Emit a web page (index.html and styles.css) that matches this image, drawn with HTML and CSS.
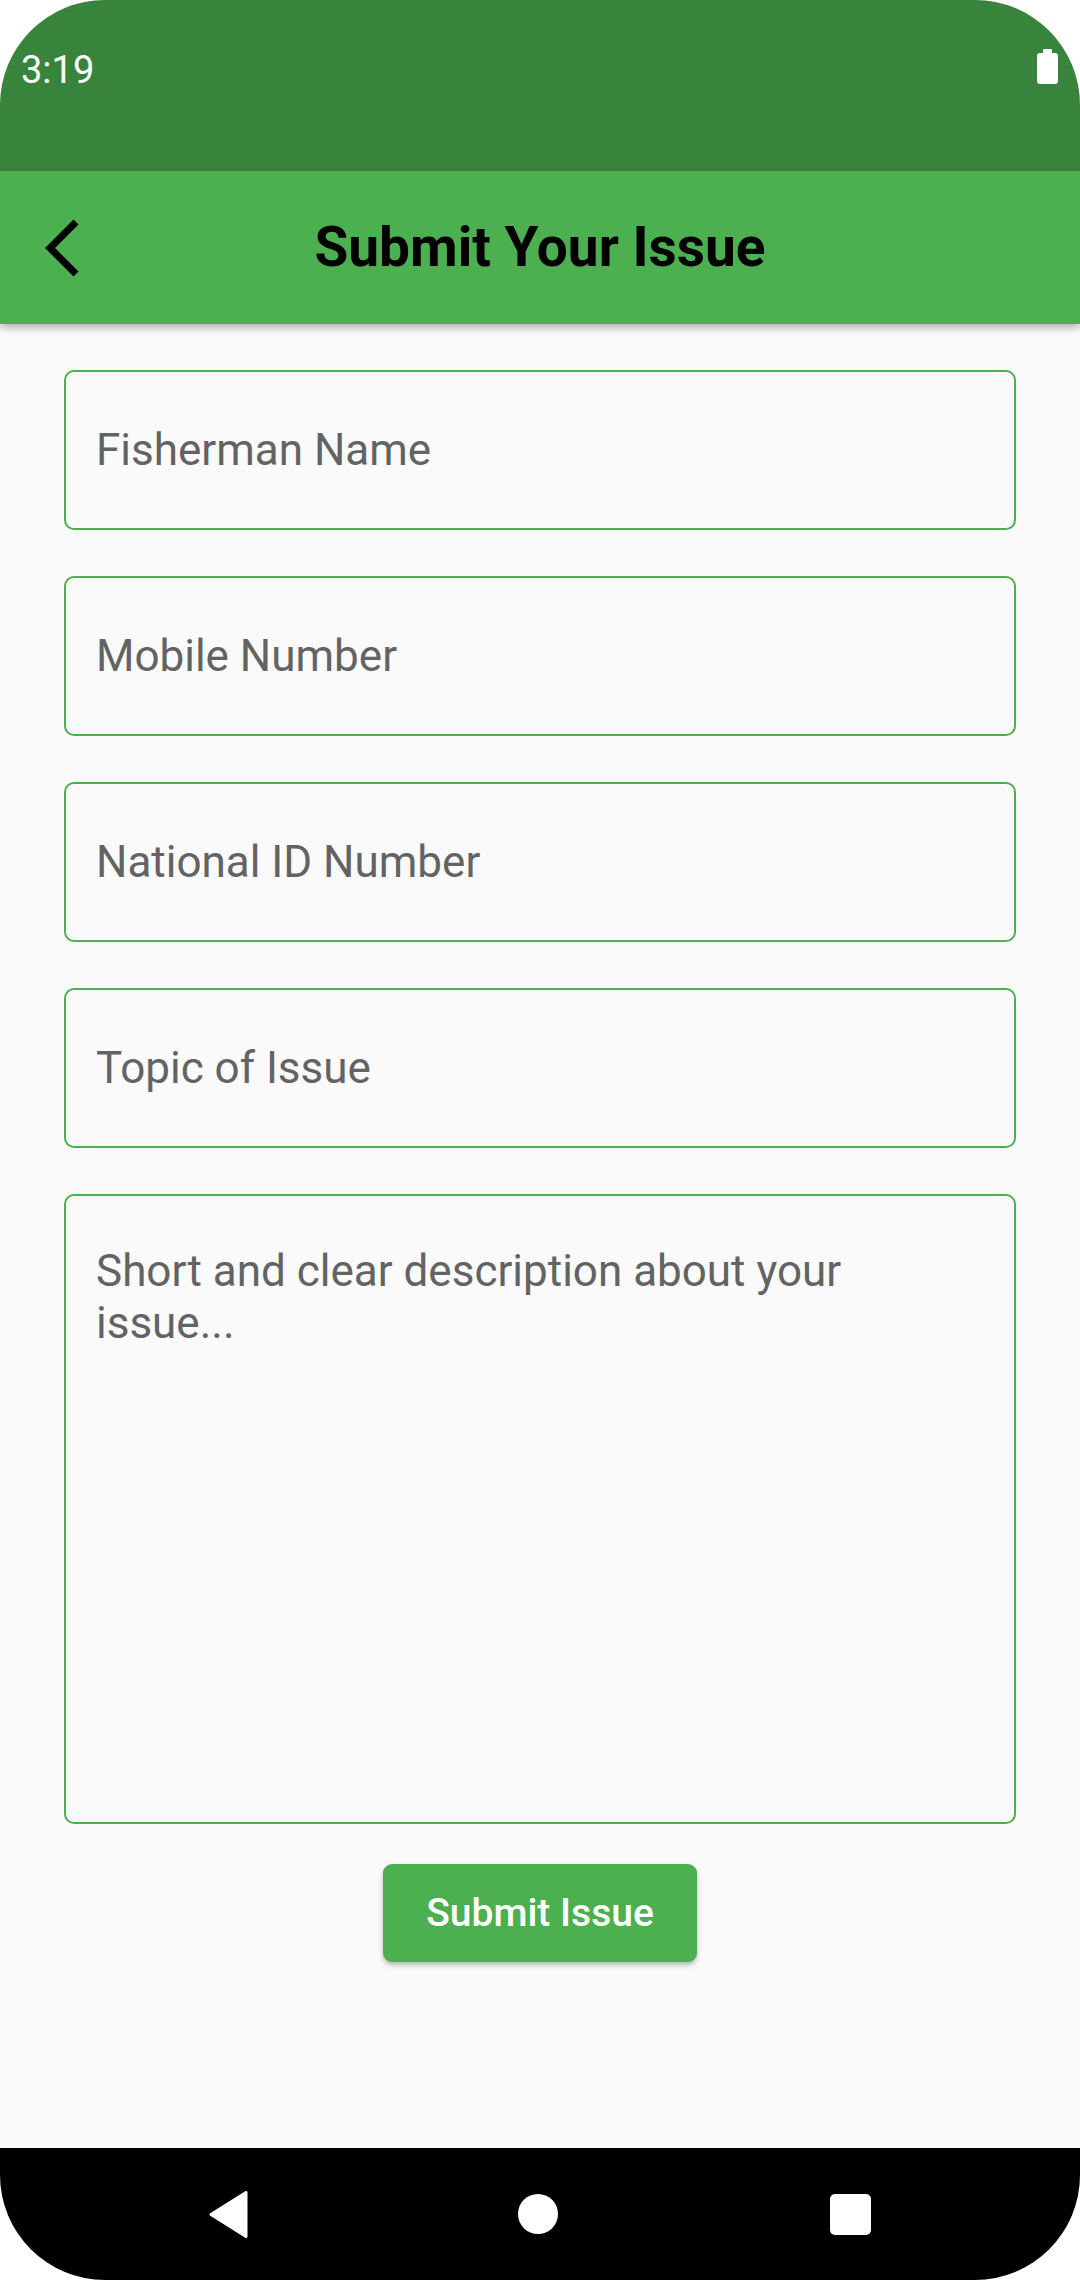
FILE: index.html
```html
<!DOCTYPE html>
<html lang="en">
<head>
<meta charset="utf-8">
<title>Submit Your Issue</title>
<link rel="stylesheet" href="styles.css">
</head>
<body>
<div class="screen">
  <div class="status">
    <span class="time">3:19</span>
    <span class="battery"><span class="nub"></span><span class="cell"></span></span>
  </div>
  <header class="appbar">
    <div class="lead">
      <svg class="back" viewBox="0 0 44 68" width="44" height="68"><polyline points="36,8 10,34 36,60" fill="none" stroke="#000" stroke-width="7" stroke-linejoin="miter" stroke-linecap="butt"/></svg>
    </div>
    <h1 class="title">Submit Your Issue</h1>
    <div></div>
  </header>
  <main class="content">
    <div class="form">
      <div class="field"><span class="hint">Fisherman Name</span></div>
      <div class="field"><span class="hint">Mobile Number</span></div>
      <div class="field"><span class="hint">National ID Number</span></div>
      <div class="field"><span class="hint">Topic of Issue</span></div>
      <div class="field area"><span class="hint">Short and clear description about your issue...</span></div>
    </div>
    <div class="actions">
      <button class="submit">Submit Issue</button>
    </div>
  </main>
  <nav class="navbar">
    <svg class="nav-back" width="39" height="47" viewBox="0 0 39 47"><polygon points="2,23.5 37,1.5 37,45.5" fill="#fff" stroke="#fff" stroke-width="3" stroke-linejoin="round"/></svg>
    <span class="nav-home"></span>
    <span class="nav-recent"></span>
  </nav>
</div>
</body>
</html>
```
FILE: styles.css
```css
* { box-sizing: border-box; }
html, body {
  margin: 0;
  padding: 0;
  background: #ffffff;
}
body {
  width: 1080px;
  height: 2280px;
  overflow: hidden;
  font-family: Roboto, "Noto Sans", "Liberation Sans", sans-serif;
}
.screen {
  width: 1080px;
  height: 2280px;
  border-radius: 105px;
  overflow: hidden;
  display: flex;
  flex-direction: column;
  background: #fafafa;
}
.status {
  height: 171px;
  flex: none;
  background: #39843d;
  display: flex;
  justify-content: space-between;
  align-items: flex-start;
  padding: 48px 22px 0 21px;
  color: #fff;
}
.time {
  font-size: 38px;
  line-height: 44px;
  font-weight: 400;
}
.battery {
  display: flex;
  flex-direction: column;
  align-items: center;
  margin-top: 1px;
}
.battery .nub {
  width: 9px;
  height: 4px;
  background: #fff;
  border-radius: 1px 1px 0 0;
}
.battery .cell {
  width: 21px;
  height: 31px;
  background: #fff;
  border-radius: 3px;
}
.appbar {
  height: 153px;
  flex: none;
  background: #4caf50;
  display: grid;
  grid-template-columns: 1fr auto 1fr;
  align-items: center;
  box-shadow: 0 4px 8px rgba(0,0,0,0.28);
  position: relative;
  z-index: 1;
}
.lead {
  display: flex;
  align-items: center;
  padding-left: 40px;
}
.back { display: block; }
.title {
  margin: 0;
  font-size: 55px;
  font-weight: 700;
  color: #000;
  line-height: 1;
}
.content {
  flex: 1;
  padding: 46px 64px 0;
  display: flex;
  flex-direction: column;
}
.form {
  display: flex;
  flex-direction: column;
  gap: 46px;
}
.field {
  height: 160px;
  border: 2px solid #4caf50;
  border-radius: 10px;
  display: flex;
  align-items: center;
  padding: 0 30px;
}
.field.area {
  height: 630px;
  align-items: flex-start;
  padding-top: 49px;
}
.hint {
  font-size: 44px;
  color: #636363;
  line-height: normal;
}
.actions {
  margin-top: 40px;
  display: flex;
  justify-content: center;
}
.submit {
  width: 314px;
  height: 98px;
  border: none;
  border-radius: 9px;
  background: #4caf50;
  color: #fff;
  font-family: Roboto, "Noto Sans", "Liberation Sans", sans-serif;
  font-size: 39px;
  font-weight: 500;
  box-shadow: 0 3px 5px rgba(0,0,0,0.28);
  padding: 0;
}
.navbar {
  height: 132px;
  flex: none;
  background: #000;
  display: flex;
  align-items: center;
  justify-content: center;
  gap: 272px;
}
.nav-back { display: block; margin-right: -2px; }
.nav-home {
  width: 40px;
  height: 40px;
  border-radius: 50%;
  background: #fff;
}
.nav-recent {
  width: 41px;
  height: 41px;
  border-radius: 5px;
  background: #fff;
}
```
